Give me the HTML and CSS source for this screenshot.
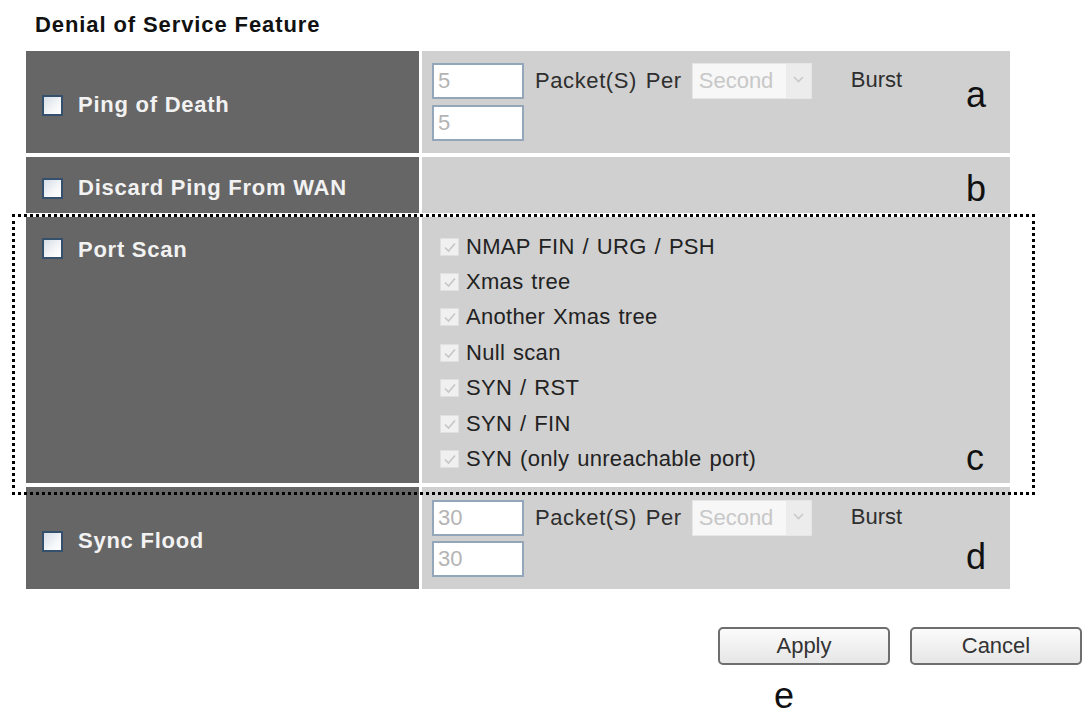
FILE: index.html
```html
<!DOCTYPE html>
<html>
<head>
<meta charset="utf-8">
<title>Denial of Service Feature</title>
<link rel="stylesheet" href="styles.css">
</head>
<body>
<div class="page">
  <h1 class="title">Denial of Service Feature</h1>

  <div class="dos">
    <div class="cell key key-mid"><span class="cb"></span><span class="label">Ping of Death</span></div>
    <div class="cell val val-rate">
      <div class="rate">
        <div class="rate-line">
          <span class="field">5</span>
          <span class="txt txt-pps">Packet(S) Per</span>
          <span class="select"><span class="select-text">Second</span><span class="select-arrow"><svg width="11" height="7" viewBox="0 0 11 7"><path d="M1 1 L5.5 5.5 L10 1" fill="none" stroke="#c9c9c9" stroke-width="1.6"/></svg></span></span>
          <span class="txt txt-burst">Burst</span>
        </div>
        <span class="field">5</span>
      </div>
      <span class="mark mark-a">a</span>
    </div>

    <div class="cell key key-mid"><span class="cb"></span><span class="label">Discard Ping From WAN</span></div>
    <div class="cell val val-wan">
      <div class="spacer"></div>
      <span class="mark mark-b">b</span>
    </div>

    <div class="cell key key-top"><span class="cb"></span><span class="label">Port Scan</span></div>
    <div class="cell val val-scan">
      <ul class="scan-list">
        <li class="scan-item"><span class="ck"><svg width="14" height="12" viewBox="0 0 14 12"><path d="M2 6.5 L5.5 10 L12 2.5" fill="none" stroke="#c6c6c6" stroke-width="1.6"/></svg></span>NMAP FIN / URG / PSH</li>
        <li class="scan-item"><span class="ck"><svg width="14" height="12" viewBox="0 0 14 12"><path d="M2 6.5 L5.5 10 L12 2.5" fill="none" stroke="#c6c6c6" stroke-width="1.6"/></svg></span>Xmas tree</li>
        <li class="scan-item"><span class="ck"><svg width="14" height="12" viewBox="0 0 14 12"><path d="M2 6.5 L5.5 10 L12 2.5" fill="none" stroke="#c6c6c6" stroke-width="1.6"/></svg></span>Another Xmas tree</li>
        <li class="scan-item"><span class="ck"><svg width="14" height="12" viewBox="0 0 14 12"><path d="M2 6.5 L5.5 10 L12 2.5" fill="none" stroke="#c6c6c6" stroke-width="1.6"/></svg></span>Null scan</li>
        <li class="scan-item"><span class="ck"><svg width="14" height="12" viewBox="0 0 14 12"><path d="M2 6.5 L5.5 10 L12 2.5" fill="none" stroke="#c6c6c6" stroke-width="1.6"/></svg></span>SYN / RST</li>
        <li class="scan-item"><span class="ck"><svg width="14" height="12" viewBox="0 0 14 12"><path d="M2 6.5 L5.5 10 L12 2.5" fill="none" stroke="#c6c6c6" stroke-width="1.6"/></svg></span>SYN / FIN</li>
        <li class="scan-item"><span class="ck"><svg width="14" height="12" viewBox="0 0 14 12"><path d="M2 6.5 L5.5 10 L12 2.5" fill="none" stroke="#c6c6c6" stroke-width="1.6"/></svg></span>SYN (only unreachable port)</li>
      </ul>
      <span class="mark mark-c">c</span>
    </div>

    <div class="cell key key-mid"><span class="cb"></span><span class="label">Sync Flood</span></div>
    <div class="cell val val-rate val-sync">
      <div class="rate">
        <div class="rate-line">
          <span class="field">30</span>
          <span class="txt txt-pps">Packet(S) Per</span>
          <span class="select"><span class="select-text">Second</span><span class="select-arrow"><svg width="11" height="7" viewBox="0 0 11 7"><path d="M1 1 L5.5 5.5 L10 1" fill="none" stroke="#c9c9c9" stroke-width="1.6"/></svg></span></span>
          <span class="txt txt-burst">Burst</span>
        </div>
        <span class="field">30</span>
      </div>
      <span class="mark mark-d">d</span>
    </div>
  </div>

  <div class="outline"></div>

  <div class="actions">
    <button class="btn" type="button">Apply</button>
    <button class="btn" type="button">Cancel</button>
  </div>
  <div class="mark mark-e">e</div>
</div>
</body>
</html>
```

FILE: styles.css
```css
* { box-sizing: border-box; }

html, body {
  margin: 0;
  padding: 0;
  background: #ffffff;
}

body {
  font-family: "Liberation Sans", Arial, sans-serif;
  color: #2a2a2a;
}

.page {
  position: relative;
  width: 1090px;
  height: 712px;
  overflow: hidden;
}

.title {
  margin: 12px 0 0 35px;
  font-size: 22px;
  line-height: 26px;
  font-weight: bold;
  letter-spacing: 0.9px;
  color: #111;
}

.dos {
  display: grid;
  grid-template-columns: 393px 588px;
  grid-template-rows: 102px 56px 266px 102px;
  column-gap: 3px;
  row-gap: 4px;
  width: 984px;
  margin: 13px 0 0 26px;
}

.cell { display: flex; }

.key {
  background: #666666;
  padding-left: 16px;
  gap: 15px;
}
.key-mid { align-items: center; padding-top: 6px; }
.key-top { align-items: flex-start; padding-top: 21px; }

.cb {
  flex: none;
  width: 21px;
  height: 21px;
  border: 2px solid #34506c;
  background: linear-gradient(135deg, #d6dee7 0%, #f4f6f8 60%, #ffffff 100%);
}

.label {
  font-size: 22px;
  font-weight: bold;
  color: #f2f2f2;
  letter-spacing: 0.75px;
  line-height: 24px;
}

.val {
  background: #d0d0d0;
  padding: 12px 24px 0 10px;
  justify-content: space-between;
  align-items: flex-start;
}
.val-sync { padding-top: 13px; }

.rate {
  display: flex;
  flex-direction: column;
  gap: 6px;
}
.val-sync .rate { gap: 5px; }

.rate-line {
  display: flex;
  align-items: center;
}

.field {
  display: flex;
  align-items: center;
  width: 92px;
  height: 36px;
  padding-left: 4px;
  background: #ffffff;
  border: 2px solid #93a6ba;
  font-size: 22px;
  color: #b4b4b4;
}

.txt {
  font-size: 22px;
  color: #2e2e2e;
}
.txt-pps { margin-left: 11px; word-spacing: 2px; letter-spacing: 0.6px; }
.txt-burst { margin-left: 39px; margin-top: -2px; }

.select {
  display: flex;
  align-items: stretch;
  width: 120px;
  height: 36px;
  margin-left: 10px;
  background: #f7f7f7;
  border: 1px solid #e6e6e6;
}
.select-text {
  flex: 1;
  display: flex;
  align-items: center;
  padding-left: 6px;
  font-size: 22px;
  color: #c8c8c8;
}
.select-arrow {
  flex: none;
  width: 25px;
  display: flex;
  align-items: flex-start;
  justify-content: center;
  padding-top: 12px;
  background: #ececec;
}

.spacer { flex: 1; }

.mark {
  flex: none;
  font-size: 36px;
  line-height: 36px;
  color: #111;
  width: 20px;
}
.mark-a { margin-top: 14px; }
.mark-b { margin-top: 2px; }
.mark-c { align-self: flex-end; margin-bottom: 7px; }
.mark-d { margin-top: 39px; }

.val-wan { padding-top: 12px; }

.val-scan { padding-top: 12px; }

.scan-list {
  list-style: none;
  margin: 0;
  padding: 0;
}
.scan-item {
  display: flex;
  align-items: center;
  height: 35.4px;
  font-size: 22px;
  letter-spacing: 0.3px;
  word-spacing: 1.5px;
  color: #222;
  padding-left: 8px;
}
.ck {
  flex: none;
  width: 19px;
  height: 18px;
  margin-right: 7px;
  background: #f0f0f0;
  border: 1px solid #e0e0e0;
  display: flex;
  align-items: center;
  justify-content: center;
}

.outline {
  position: absolute;
  left: 12px;
  top: 214px;
  width: 1023px;
  height: 281px;
  border: 3px dotted #000;
  pointer-events: none;
}

.actions {
  display: flex;
  justify-content: flex-end;
  gap: 20px;
  padding-right: 8px;
  margin-top: 38px;
}

.btn {
  width: 172px;
  height: 38px;
  border: 2px solid #6e6e6e;
  border-radius: 5px;
  background: linear-gradient(#fbfbfb, #e6e6e6);
  font-family: "Liberation Sans", Arial, sans-serif;
  font-size: 22px;
  color: #333;
  padding: 0;
}

.mark-e {
  margin: 17px 0 0 774px;
  line-height: 28px;
  width: auto;
}
```
